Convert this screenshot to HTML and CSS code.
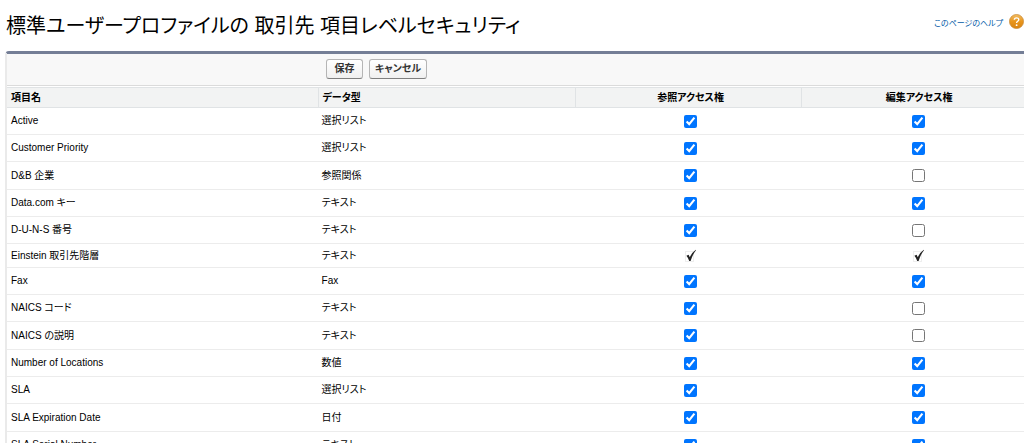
FILE: index.html
```html
<!DOCTYPE html>
<html lang="ja">
<head>
<meta charset="utf-8">
<title>項目レベルセキュリティ</title>
<link rel="stylesheet" href="styles.css">
</head>
<body>
<header class="page-header">
  <h1 class="page-title">標準ユーザープロファイルの 取引先 項目レベルセキュリティ</h1>
  <a class="help" href="#help">
    <span class="help-text">このページのヘルプ</span>
    <svg class="help-icon" viewBox="0 0 16 16" aria-hidden="true">
      <defs><linearGradient id="orb" x1="0" y1="0" x2="0" y2="1"><stop offset="0" stop-color="#f3bd63"/><stop offset=".5" stop-color="#e8951c"/><stop offset="1" stop-color="#d98412"/></linearGradient></defs>
      <circle cx="8" cy="8" r="7.5" fill="url(#orb)" stroke="#c98a35" stroke-width=".8"/>
      <path d="M5.7 6.2C5.7 3.4 10.4 3.4 10.4 6.1C10.4 7.8 8.1 7.7 8.1 9.6" fill="none" stroke="#fff" stroke-width="1.5"/>
      <circle cx="8.1" cy="11.9" r="1" fill="#fff"/>
    </svg>
  </a>
</header>
<main class="panel">
  <form>
    <div class="toolbar">
      <button class="btn" type="button">保存</button>
      <button class="btn" type="button">キャンセル</button>
    </div>
    <table class="fields">
      <colgroup><col class="col-name"><col class="col-type"><col class="col-read"><col class="col-edit"></colgroup>
      <thead><tr><th scope="col">項目名</th><th scope="col">データ型</th><th class="access" scope="col">参照アクセス権</th><th class="access" scope="col">編集アクセス権</th></tr></thead>
      <tbody>
        <tr><td>Active</td><td>選択リスト</td><td class="access"><input type="checkbox" aria-label="Active 参照" checked></td><td class="access"><input type="checkbox" aria-label="Active 編集" checked></td></tr>
        <tr><td>Customer Priority</td><td>選択リスト</td><td class="access"><input type="checkbox" aria-label="Customer Priority 参照" checked></td><td class="access"><input type="checkbox" aria-label="Customer Priority 編集" checked></td></tr>
        <tr><td>D&amp;B 企業</td><td>参照関係</td><td class="access"><input type="checkbox" aria-label="D&amp;B 企業 参照" checked></td><td class="access"><input type="checkbox" aria-label="D&amp;B 企業 編集"></td></tr>
        <tr><td>Data.com キー</td><td>テキスト</td><td class="access"><input type="checkbox" aria-label="Data.com キー 参照" checked></td><td class="access"><input type="checkbox" aria-label="Data.com キー 編集" checked></td></tr>
        <tr><td>D-U-N-S 番号</td><td>テキスト</td><td class="access"><input type="checkbox" aria-label="D-U-N-S 番号 参照" checked></td><td class="access"><input type="checkbox" aria-label="D-U-N-S 番号 編集"></td></tr>
        <tr class="fixed"><td>Einstein 取引先階層</td><td>テキスト</td>
          <td class="access"><svg class="mark" viewBox="0 0 13 13" role="img" aria-label="有効"><rect x="1.5" y="2.5" width="8" height="10" fill="none" stroke="#ddd" stroke-dasharray="1 1"/><path d="M2.4 6.8L4.6 5.8L5.8 8.2Q8 3.6 11.8.8L12 1.2Q8.6 5.4 6.6 12L5.2 12Q4.2 8.8 2.4 6.8Z" fill="#222"/></svg></td>
          <td class="access"><svg class="mark" viewBox="0 0 13 13" role="img" aria-label="有効"><rect x="1.5" y="2.5" width="8" height="10" fill="none" stroke="#ddd" stroke-dasharray="1 1"/><path d="M2.4 6.8L4.6 5.8L5.8 8.2Q8 3.6 11.8.8L12 1.2Q8.6 5.4 6.6 12L5.2 12Q4.2 8.8 2.4 6.8Z" fill="#222"/></svg></td></tr>
        <tr><td>Fax</td><td>Fax</td><td class="access"><input type="checkbox" aria-label="Fax 参照" checked></td><td class="access"><input type="checkbox" aria-label="Fax 編集" checked></td></tr>
        <tr><td>NAICS コード</td><td>テキスト</td><td class="access"><input type="checkbox" aria-label="NAICS コード 参照" checked></td><td class="access"><input type="checkbox" aria-label="NAICS コード 編集"></td></tr>
        <tr><td>NAICS の説明</td><td>テキスト</td><td class="access"><input type="checkbox" aria-label="NAICS の説明 参照" checked></td><td class="access"><input type="checkbox" aria-label="NAICS の説明 編集"></td></tr>
        <tr><td>Number of Locations</td><td>数値</td><td class="access"><input type="checkbox" aria-label="Number of Locations 参照" checked></td><td class="access"><input type="checkbox" aria-label="Number of Locations 編集" checked></td></tr>
        <tr><td>SLA</td><td>選択リスト</td><td class="access"><input type="checkbox" aria-label="SLA 参照" checked></td><td class="access"><input type="checkbox" aria-label="SLA 編集" checked></td></tr>
        <tr><td>SLA Expiration Date</td><td>日付</td><td class="access"><input type="checkbox" aria-label="SLA Expiration Date 参照" checked></td><td class="access"><input type="checkbox" aria-label="SLA Expiration Date 編集" checked></td></tr>
        <tr><td>SLA Serial Number</td><td>テキスト</td><td class="access"><input type="checkbox" aria-label="SLA Serial Number 参照" checked></td><td class="access"><input type="checkbox" aria-label="SLA Serial Number 編集" checked></td></tr>
      </tbody>
    </table>
  </form>
</main>
</body>
</html>
```
FILE: styles.css
```css
* { box-sizing: border-box; }

html { height: 100%; overflow: hidden; }

body {
  height: 100%;
  margin: 0;
  overflow: hidden;
  background: #fff;
  color: #000;
  font-family: "Liberation Sans", "Noto Sans CJK JP", sans-serif;
  font-size: 10px;
  font-feature-settings: "palt";
}

.page-header {
  display: flex;
  justify-content: space-between;
  height: 51px;
  padding: 10px 0 0 6px;
}

.page-title {
  margin: 0;
  font-size: 20px;
  font-weight: 400;
  line-height: 32px;
  white-space: nowrap;
}

.help {
  display: flex;
  gap: 6px;
  color: #015ba7;
  font-size: 8px;
  text-decoration: none;
  line-height: 28px;
}

.help-icon { width: 15px; height: 15px; margin-top: 4px; }

.panel {
  margin: 0 -8px 0 5px;
  border-top: 3px solid #747e96;
  border-left: 2px solid #eaeaea;
  border-radius: 4px 0 0 0;
}

.toolbar {
  display: flex;
  gap: 6px;
  height: 32px;
  padding: 5px 0 0 319px;
  background: #f8f8f8;
  border-bottom: 1px solid #dbdbdb;
}

.btn {
  height: 20px;
  min-width: 37px;
  padding: 0 5px;
  border: 1px solid #b5b5b5;
  border-bottom-color: #7f7f7f;
  border-radius: 3px;
  background: linear-gradient(#fff, #f0f0f0);
  color: #333;
  font: bold 10px/18px "Liberation Sans", "Noto Sans CJK JP", sans-serif;
  font-feature-settings: "palt";
}

.fields {
  width: 100%;
  border-collapse: separate;
  border-spacing: 0;
  table-layout: fixed;
  border-top: 1px solid #fff;
}

.col-name { width: 30.3%; }
.col-type { width: 25.1%; }
.col-read { width: 22.1%; }
.col-edit { width: 22.5%; }

.fields th {
  height: 21px;
  padding: 0 4px;
  background: #f2f3f3;
  border-top: 1px solid #e0e3e5;
  border-bottom: 1px solid #e0e3e5;
  border-left: 1px solid #e0e3e5;
  line-height: 18px;
  text-align: left;
}

.fields th:first-child { border-left: 0; }

.fields td {
  height: 27px;
  padding: 0 4px;
  border-bottom: 1px solid #ececec;
  line-height: 16px;
}

.fields tr:nth-child(3n) td { height: 28px; }
.fields .fixed:nth-child(n) td { height: 24px; }

.fields .access { padding: 0 4px 0 8px; text-align: center; }

.access input { display: block; width: 13px; height: 13px; margin: 0 auto; }

.mark { display: block; width: 13px; height: 13px; margin: 0 auto; }
```
